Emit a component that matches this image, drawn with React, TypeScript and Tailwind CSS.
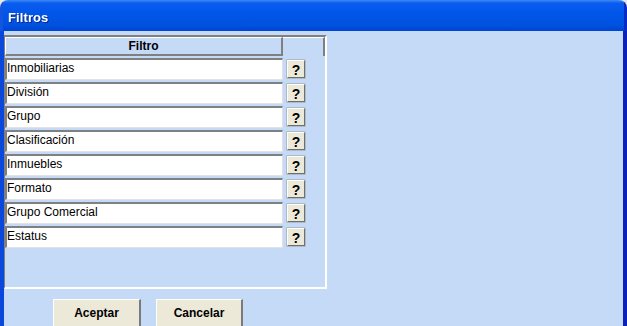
import React from "react";

const filters = [
  "Inmobiliarias",
  "División",
  "Grupo",
  "Clasificación",
  "Inmuebles",
  "Formato",
  "Grupo Comercial",
  "Estatus",
];

export default function App() {
  return (
    <div className="w-[627px] h-[326px] overflow-hidden bg-[#e8e8e8] font-['Liberation_Sans',Arial,sans-serif] text-black">
      <div className="flex flex-col h-full rounded-t-[8px] overflow-hidden">
        {/* title bar */}
        <div className="h-[31px] shrink-0 flex items-center pl-[5px] pt-[4px] bg-[linear-gradient(180deg,#3f8cf3_0%,#0a5cf0_10%,#0056e8_45%,#0052e0_80%,#0043d2_100%)] border-l-[3px] border-r-[3px] border-l-[#1455e0] border-r-[#0a2cc4]">
          <span className="text-white font-bold text-[13px] tracking-[0.1px] drop-shadow-[1px_1px_0_#0a2a8a]">
            Filtros
          </span>
        </div>

        {/* body */}
        <div className="flex-1 flex flex-col border-l-4 border-r-4 border-l-[#0a48dc] border-r-[#0a22b8] bg-[#c4daf6] pt-[4px]">
          <div className="w-[323px] h-[254px] shrink-0 border-t-2 border-l border-t-[#808080] border-l-[#808080] border-r-2 border-b-2 border-r-white border-b-white">
            <div className="flex">
              <div className="w-[278px] h-[19px] flex items-center justify-center text-[12px] font-bold border-t border-l border-t-white border-l-white border-r-2 border-b-2 border-r-[#808080] border-b-[#808080]">
                Filtro
              </div>
              <div className="w-[42px] h-[19px] border-t border-t-white border-r-2 border-r-[#808080]" />
            </div>

            <div className="flex flex-col gap-[2px] mt-[2px]">
              {filters.map((f) => (
                <div key={f} className="flex">
                  <div className="w-[278px] h-[22px] bg-white border-t-2 border-l-2 border-t-[#808080] border-l-[#808080] border-r border-b border-r-[#e2e2e2] border-b-[#e2e2e2] text-[12px] leading-[14px] pt-[1px] whitespace-nowrap">
                    {f}
                  </div>
                  <button
                    type="button"
                    className="ml-[4px] mt-[2px] w-[18px] h-[18px] flex items-center justify-center bg-[#ece9d8] border border-t-white border-l-white border-r-[#6f6f6f] border-b-[#6f6f6f] shadow-[0_0_0_0.5px_#9a9a9a] text-[14px] font-bold leading-none pt-[1px]"
                  >
                    ?
                  </button>
                </div>
              ))}
            </div>
          </div>

          <div className="flex gap-[15px] pl-[49px] mt-[10px]">
            <button
              type="button"
              className="w-[88px] h-[28px] shrink-0 bg-[#ece9d8] border border-t-white border-l-white border-r-2 border-r-[#7a7a7a] border-b-[#7a7a7a] text-[12px] font-bold"
            >
              Aceptar
            </button>
            <button
              type="button"
              className="w-[87px] h-[28px] shrink-0 bg-[#ece9d8] border border-t-white border-l-white border-r-2 border-r-[#7a7a7a] border-b-[#7a7a7a] text-[12px] font-bold"
            >
              Cancelar
            </button>
          </div>
        </div>
      </div>
    </div>
  );
}
